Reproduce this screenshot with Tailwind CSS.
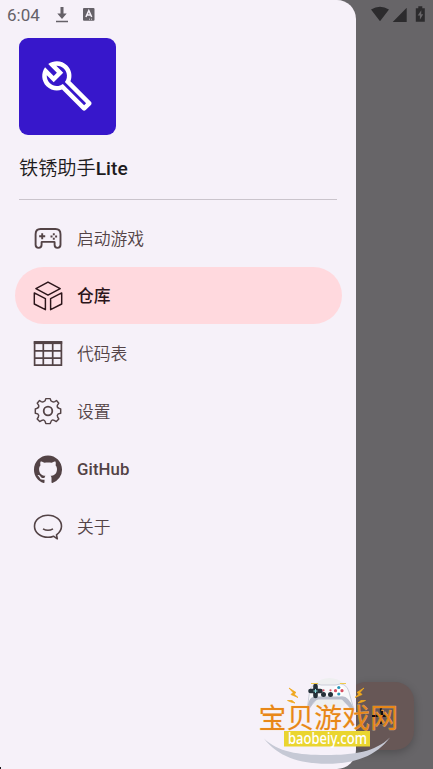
<!DOCTYPE html>
<html lang="zh-CN">
<head>
<meta charset="utf-8">
<meta name="viewport" content="width=device-width, initial-scale=1">
<title>铁锈助手Lite</title>
<script src="https://cdn.jsdelivr.net/npm/@tailwindcss/browser@4"></script>
</head>
<body class="bg-[#676568] overflow-hidden">
<div class="relative w-[433px] h-[769px] overflow-hidden bg-[#676568] font-['Roboto','Noto_Sans_CJK_SC',sans-serif]">

  <!-- Floating action button under the scrim -->
  <div class="absolute right-[19px] bottom-[19px] w-[67px] h-[68px] rounded-[19px] bg-[#675756] shadow-[0_3px_8px_rgba(0,0,0,0.22)] flex items-center justify-center">
    <svg class="w-6 h-6" viewBox="0 0 24 24" stroke="#160d0e" stroke-width="2.2"><path d="M12 4v16M4 12h16"/></svg>
  </div>

  <!-- Navigation drawer -->
  <aside class="relative w-[356px] h-full bg-[#f6f1f9] rounded-r-[19px] flex flex-col">
    <div class="h-[38px] shrink-0 flex items-start pl-[7px] pt-[5px] text-[#656168]">
      <span class="text-[17px] leading-5 w-[48px]">6:04</span>
      <svg class="w-[14px] h-[18px] mt-[2px]" viewBox="0 0 14 18" fill="currentColor"><path d="M5.500 0h3v6.500h3.200L7 12 2.300 6.500h3.200zM1 13.700h12v1.500H1z"/></svg>
      <svg class="w-[12px] h-[14px] ml-[14px] mt-[3px]" viewBox="0 0 12 14"><rect width="11.500" height="12.800" rx="1" fill="#656168"/><path d="M2.900 9 5.800 2.600 8.700 9M4 7h3.600" fill="none" stroke="#f6f1f9" stroke-width="1.500"/><path d="M6 11.200h1m1 0h1" stroke="#f6f1f9" stroke-width=".8"/></svg>
    </div>
    <header class="mx-[19px] h-[162px] shrink-0 border-b border-[#cac4cc] flex flex-col">
      <div class="w-[96.500px] h-[97px] rounded-[9px] bg-[#3717cb] pl-[21px] pt-[21px]">
        <svg class="w-[54px] h-[54px]" viewBox="0 0 24 24" fill="#fff"><path fill-rule="evenodd" d="M22.610 18.990l-9.080-9.080c.93-2.340.45-5.100-1.440-7C9.790.61 6.210.4 3.660 2.260L7.500 6.110 6.080 7.520 2.250 3.690C.39 6.230.6 9.820 2.900 12.110c1.860 1.860 4.570 2.350 6.890 1.480l9.110 9.110c.39.39 1.020.39 1.410 0l2.300-2.300c.4-.38.4-1.010 0-1.410zm-3 1.600l-9.460-9.460c-.61.45-1.290.72-2 .82-1.360.2-2.790-.21-3.830-1.250C3.370 9.760 2.930 8.500 3 7.260l3.090 3.090 4.240-4.240-3.090-3.090c1.240-.07 2.490.37 3.440 1.310 1.080 1.080 1.490 2.570 1.240 3.960-.12.71-.42 1.370-.88 1.960l9.450 9.450-.88.890z"/></svg>
      </div>
      <h1 class="mt-[21px] text-[19.200px] leading-[26px] text-[#1d1b20] whitespace-nowrap"><span class="font-[350]">铁锈助手</span><span class="font-medium">Lite</span></h1>
    </header>

    <nav class="mt-[9px] ml-[14.500px] w-[327px] flex flex-col text-[16.800px] text-[#534346]">
      <a class="h-[57.700px] pl-[18.500px] flex items-center gap-[14px]">
        <svg class="w-[30px] h-[30px] mt-px" viewBox="0 0 30 30" fill="none" stroke="currentColor" stroke-width="1.900"><g transform="translate(0 .8)"><path d="M7.500 5.200H22.500Q27.500 5.200 27.500 10.500V21Q27.500 24.100 24.400 24.100Q21.600 24.100 21.600 21V18.500Q21.600 18.100 21.200 18.100H9Q8.600 18.100 8.600 18.500V21Q8.600 24.100 5.600 24.100Q2.600 24.100 2.600 21V10.500Q2.600 5.200 7.500 5.200Z"/><path d="M9.200 9.500v6M6.200 12.500h6"/><path d="M20.800 9.500v2m0 2.500v2m-3.300-3.300h2m2.600 0h2"/></g></svg>
        <span class="mt-[3px] font-[350]">启动游戏</span>
      </a>
      <a class="h-[57.700px] pl-[18.500px] flex items-center gap-[14px] rounded-full bg-[#ffd9de] text-[#2b151a]">
        <svg class="w-[30px] h-[30px] mt-px" viewBox="0 0 30 30" fill="none" stroke="currentColor" stroke-width="1.450" stroke-linejoin="round"><path d="M15 1.100 27.200 7.600 15 14.100 2.900 7.600ZM1.300 11.900 12.400 17.600V28.700L1.300 23ZM28.700 11.900 17.600 17.600V28.700L28.700 23Z"/></svg>
        <span class="mt-[3px] font-medium">仓库</span>
      </a>
      <a class="h-[57.700px] pl-[18.500px] flex items-center gap-[14px]">
        <svg class="w-[30px] h-[30px] mt-px" viewBox="0 0 30 30" fill="none" stroke="currentColor" stroke-width="1.700"><path d="M1.600 3.200H28.400V26.200H1.600ZM10.300 4V26M19.700 4V26M1.600 11.900H28.400M1.600 19.100H28.400"/><path d="M.8 3.600H29.200" stroke-width="3"/></svg>
        <span class="mt-[3px] font-[350]">代码表</span>
      </a>
      <a class="h-[57.700px] pl-[18.500px] flex items-center gap-[14px]">
        <svg class="w-[30px] h-[30px] mt-px" viewBox="0 0 30 30" fill="none" stroke="currentColor" stroke-width="1.450" stroke-linejoin="round"><circle cx="15" cy="15" r="4.300" stroke-width="1.800"/><path d="M12.800 2.600H17.200L17.900 4.800Q20 6.600 21.800 5.600L23.500 4.500 25.800 7.200 24.300 9.300Q23.800 11.600 26 12.300L27.700 13V17.200L25.300 17.900Q23.600 19.300 24.600 21L25.800 22.900 23.300 25.600 21.200 24.400Q18.700 23.400 18 25.500L17.200 27.600H12.800L12.100 25.500Q11.300 23.400 8.800 24.400L6.700 25.600 4.200 22.900 5.400 21Q6.400 19.300 4.700 17.900L2.300 17.200V13L4 12.300Q6.200 11.600 5.700 9.300L4.200 7.200 6.500 4.500 8.200 5.600Q10 6.600 12.100 4.800Z"/></svg>
        <span class="mt-[3px] font-[350]">设置</span>
      </a>
      <a class="h-[57.700px] pl-[18.500px] flex items-center gap-[14px]">
        <svg class="w-[30px] h-[30px] mt-[2px]" viewBox="-.55 -.35 17.100 17.100" fill="currentColor"><path d="M8 0C3.580 0 0 3.580 0 8c0 3.540 2.290 6.530 5.470 7.590.4.070.55-.17.55-.38 0-.19-.01-.82-.01-1.490-2.010.37-2.530-.49-2.690-.94-.09-.23-.48-.94-.82-1.130-.28-.15-.68-.52-.01-.53.63-.01 1.080.58 1.230.82.72 1.210 1.870.87 2.330.66.070-.52.28-.87.51-1.070-1.780-.2-3.640-.89-3.640-3.950 0-.87.31-1.590.82-2.150-.08-.2-.36-1.020.08-2.120 0 0 .67-.21 2.200.82.64-.18 1.320-.27 2-.27s1.360.09 2 .27c1.530-1.040 2.200-.82 2.200-.82.44 1.100.16 1.920.08 2.120.51.56.82 1.270.82 2.150 0 3.070-1.870 3.750-3.650 3.950.29.25.54.73.54 1.480 0 1.070-.01 1.930-.01 2.200 0 .21.15.46.55.38A8 8 0 0 0 16 8c0-4.420-3.580-8-8-8z"/></svg>
        <span class="mt-[2px] font-medium tracking-[.1px]">GitHub</span>
      </a>
      <a class="h-[57.700px] pl-[18.500px] flex items-center gap-[14px]">
        <svg class="w-[30px] h-[30px] mt-px" viewBox="0 0 30 30" fill="none" stroke="currentColor" stroke-width="1.600" stroke-linejoin="round"><path d="M20.500 24.200Q18 25.300 15 25.300C7.500 25.300 1.500 20.500 1.500 14.200C1.500 8 7.500 3.200 15 3.200S28.500 8 28.500 14.200Q28.500 19 23.500 22.800L24.300 26.800Z"/><path d="M10 16.900Q15 19.700 20 16.900"/></svg>
        <span class="mt-[3px] font-[350]">关于</span>
      </a>
    </nav>
  </aside>

  <!-- System status icons -->
  <svg class="absolute left-[370px] top-[5px] w-[58px] h-[19px]" viewBox="0 0 58 19" fill="#2c2b2d"><path d="M1 4.500Q10 -.9 19 4.500L10 16.300ZM36.700 2.800V17H22.700ZM48.300 1.200h4v2h2.500v13.600h-9V3.200h2.500z"/><path d="M51.300 5.200 47.700 10.500h2.200v4.300l3.300-5.600h-2z" fill="#676568"/></svg>

  <!-- Site badge -->
  <svg class="absolute left-[250px] top-[670px] w-[183px] h-[99px]" viewBox="0 0 183 99">
    <path d="M14 68.500C28 82 48 85 76 85S125 82 140 67.500C126 86 105 93.800 77 93.800S27 86 14 68.500Z" fill="#c6c9d5"/>
    <path d="M58.500 29a21 21 0 0 1 42 0L92 37H67Z" fill="#eeeff0"/>
    <path d="M64 14.800Q67 12.800 71 15H86Q91 12.800 94 14.800Q98 17 99 22L103.500 38Q101 41 98.500 36L92 29Q90 27.500 86 28H73Q68 27 66 30L61 36Q59 40 57.500 37L59.500 22Q60 17 64 14.800Z" fill="#f7f7fa" stroke="#c2c5d2" stroke-width=".8"/>
    <path d="M57.500 38Q58 31 61 28Q64 25.500 68 26.500H90Q95 25.500 98 29Q101 32 103.500 38Q101 40 98.500 36L92 29.500H68Q64 30 60 38Z" fill="#b9bdcb"/>
    <path d="M65.500 16v10M60.500 21h10" stroke="#253039" stroke-width="4.600" stroke-linecap="round"/><path d="M65.500 19v4M63.500 21h4" stroke="#8edfe2" stroke-width="1"/>
    <g fill="#253039"><circle cx="73.500" cy="24.500" r="2.500"/><circle cx="80.500" cy="24.500" r="2.500"/></g><g fill="#d55063"><circle cx="73.500" cy="20.300" r="1.100"/><circle cx="80.500" cy="20.300" r="1.100"/></g>
    <circle cx="88.800" cy="20.700" r="5.500" fill="#fff"/><circle cx="88.800" cy="17.500" r="1.600" fill="#2b96b7"/><circle cx="88.800" cy="24" r="1.600" fill="#2b96b7"/><circle cx="85.500" cy="20.700" r="1.600" fill="#d55063"/><circle cx="92" cy="20.700" r="1.600" fill="#d55063"/>
    <path d="M61 13.500h7M90 13.500h6" stroke="#efc94c" stroke-width="1"/>
    <g fill="#f0a81e" stroke="#f0a81e" stroke-width=".8"><path d="M39 18 46 22.500 44 24 48 27.500 41 24.500 43 22.500ZM37.500 30.500h4.500l3 2.500-4-1ZM114 18 107 22.500 109 24 105 27.500 112 24.500 110 22.500ZM115.500 30.500h-4.500l-3 2.500 4-1z"/></g>
    <text x="8.500" y="58" font-size="27.800" font-weight="400" textLength="139.500" font-family="'Noto Sans CJK SC',sans-serif" fill="#e88718" stroke="#f8d9a0" stroke-opacity=".65" stroke-width=".6" paint-order="stroke">宝贝游戏网</text>
    <path d="M122 46h3M132 41v4" stroke="#160d0e" stroke-width="2.200"/>
    <rect x="34" y="61" width="86" height="15.500" fill="#ead52f"/>
    <text x="38" y="73.500" font-size="15.500" font-weight="500" textLength="79" lengthAdjust="spacingAndGlyphs" font-family="'Noto Sans',sans-serif" fill="#fff">baobeiy.com</text>
  </svg>
  <div class="absolute left-0 bottom-0 w-px h-[2px] bg-[#171519]"></div>
</div>
</body>
</html>
